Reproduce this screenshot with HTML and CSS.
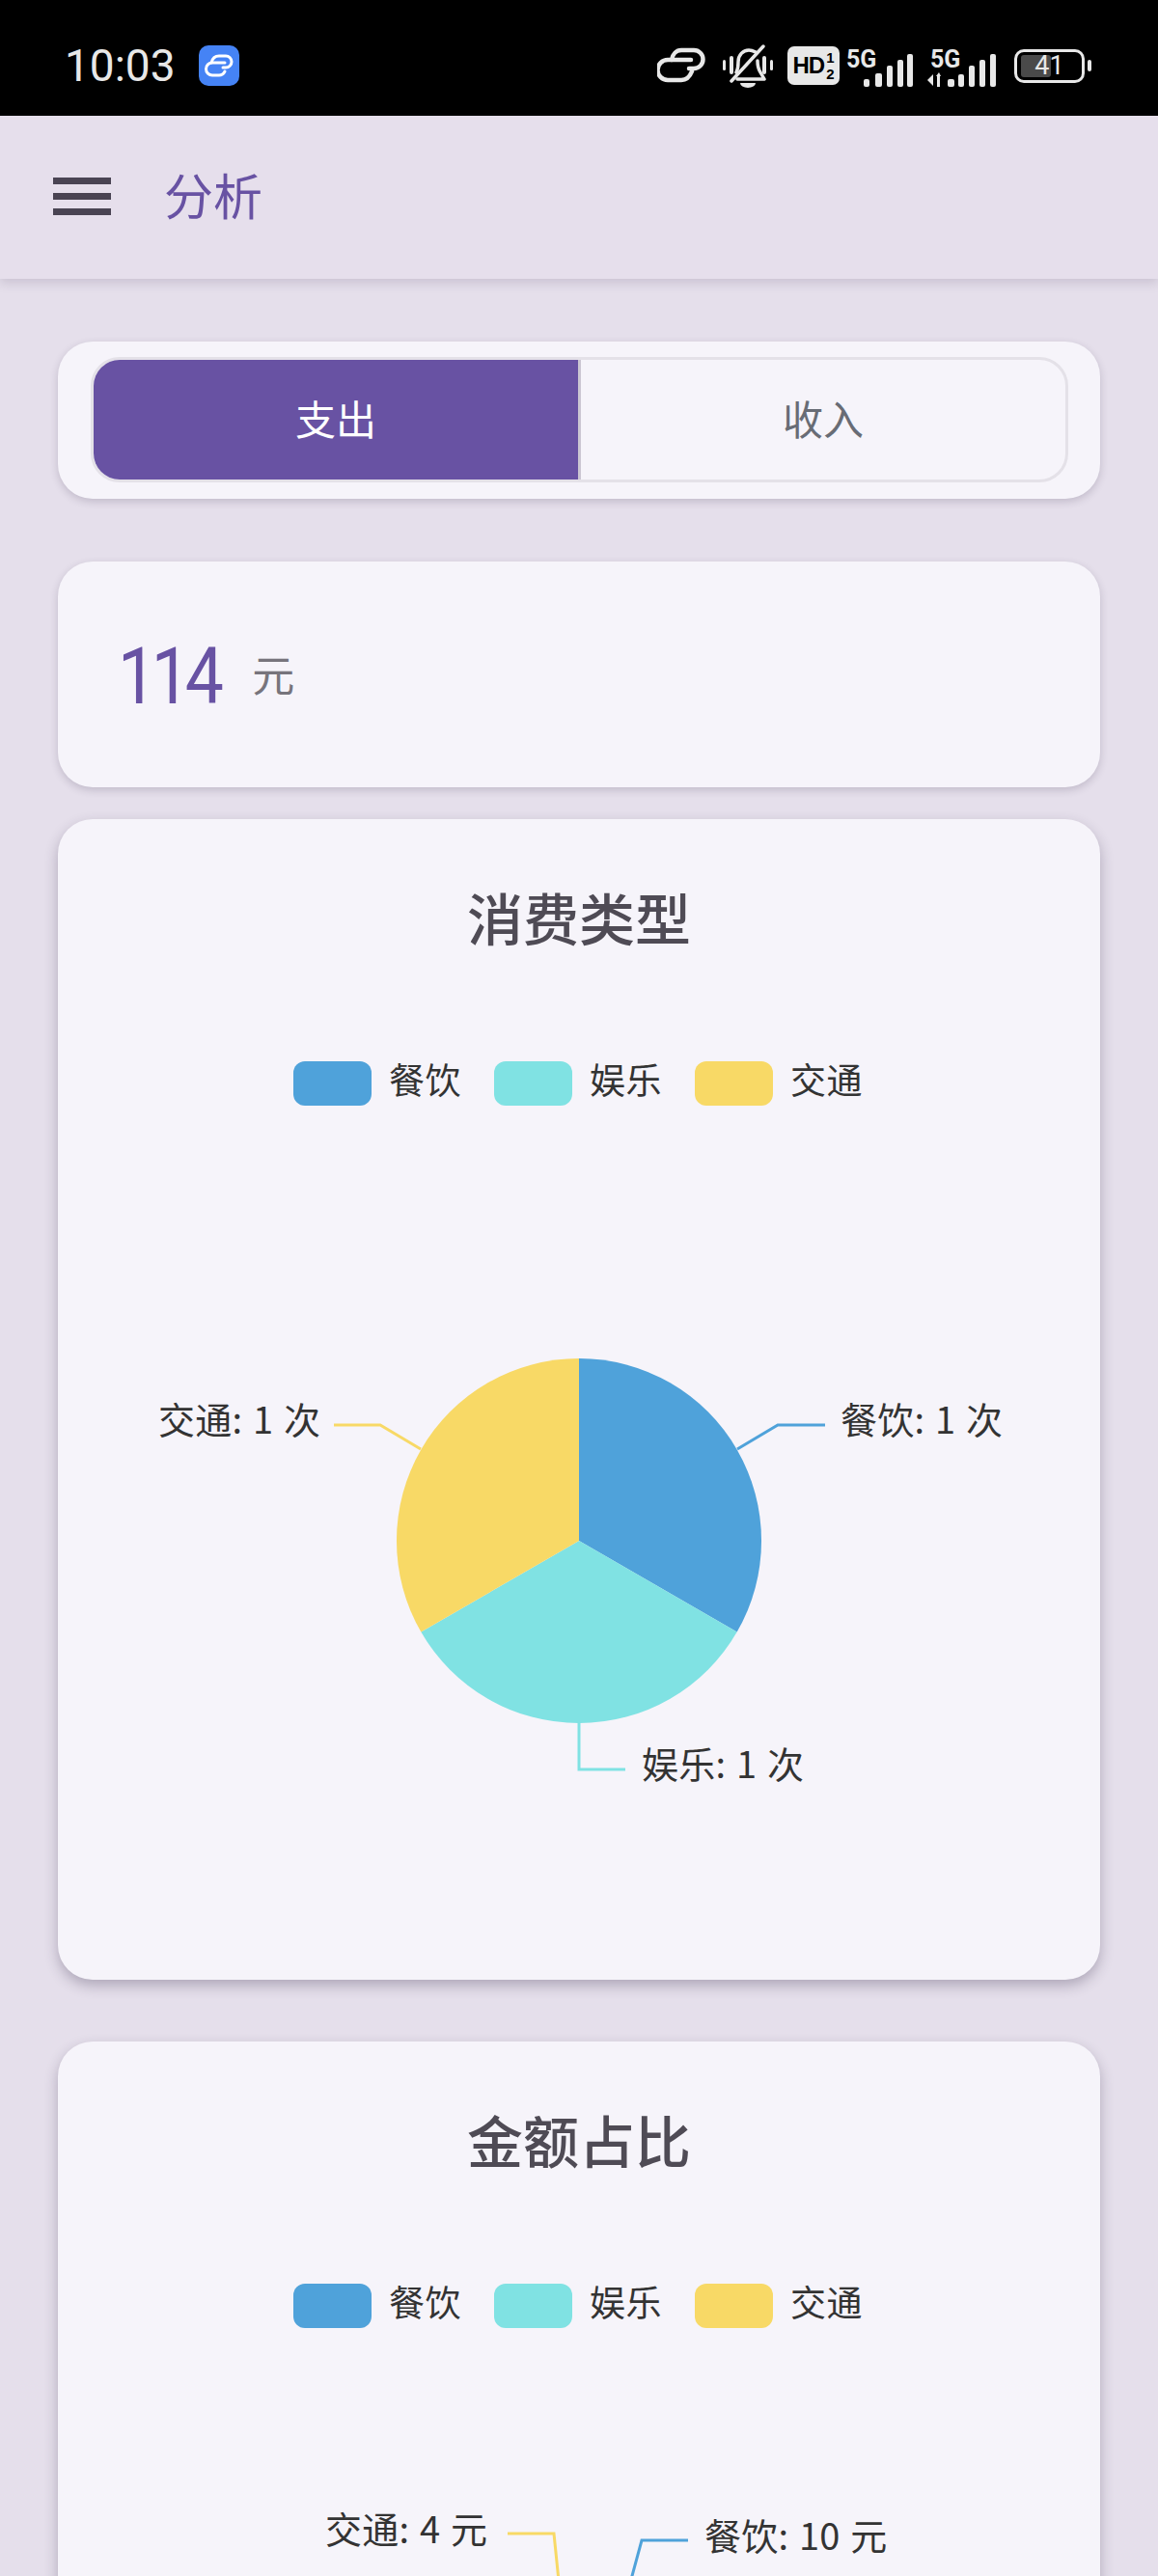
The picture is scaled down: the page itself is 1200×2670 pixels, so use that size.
FILE: index.html
```html
<!DOCTYPE html>
<html lang="zh-CN">

<head>
    <meta charset="UTF-8">
    <meta name="viewport" content="width=device-width, initial-scale=1.0">
    <title>分析</title>
    <link rel="stylesheet" href="styles.css">
</head>

<body>
    <div class="status-bar">
        <div class="status-left">
            <span class="clock">10:03</span>
            <svg class="app-badge" width="42" height="42" viewBox="0 0 42 42">
                <rect width="42" height="42" rx="10" fill="#4583f5" />
                <path d="M13 18c1-4 4-7 8-7h7a6 6 0 0 1 0 12h-3" fill="none" stroke="#fff" stroke-width="3" stroke-linecap="round" />
                <path d="M27 18H14a6.500 6.500 0 0 0 0 13h7c3 0 5-2 6-4" fill="none" stroke="#fff" stroke-width="3" stroke-linecap="round" />
            </svg>
        </div>
        <div class="status-right">
            <svg class="ic-link" width="50" height="38" viewBox="0 0 50 38">
                <path d="M15 13c1-6 5-10 10-10h13a9.500 9.500 0 0 1 0 19h-5" fill="none" stroke="#e8e8e8" stroke-width="4.500" stroke-linecap="round" />
                <path d="M35 13H11a10.500 10.500 0 0 0 0 21h14c5 0 9-4 11-9" fill="none" stroke="#e8e8e8" stroke-width="4.500" stroke-linecap="round" />
            </svg>
            <svg class="ic-bell" width="52" height="46" viewBox="0 0 52 46">
                <g fill="#e8e8e8">
                    <rect x="0" y="17" width="3" height="11" rx="1.500" />
                    <rect x="7" y="13" width="4" height="19" rx="2" />
                    <rect x="41" y="13" width="4" height="19" rx="2" />
                    <rect x="49" y="17" width="3" height="11" rx="1.500" />
                    <path d="M18 41h16a8 5 0 0 1-16 0z" />
                </g>
                <path d="M14 30c2-4 2-7 2-11 0-7 5-12 11-12 3 0 5 1 7 2M36 18c0 5 1 9 3 12l4 7H15" fill="none" stroke="#e8e8e8" stroke-width="3.500" stroke-linecap="round" stroke-linejoin="round" />
                <path d="M9 39 42 3" stroke="#e8e8e8" stroke-width="3.500" stroke-linecap="round" />
            </svg>
            <div class="hd-badge">
                <span class="hd-main">HD</span>
                <span class="hd-sims"><span>1</span><span>2</span></span>
            </div>
            <svg class="ic-signal" width="72" height="50" viewBox="0 -8 72 50">
                <text x="0" y="19" class="net-label">5G</text>
                <g fill="#e8e8e8">
                    <rect x="18" y="31" width="6" height="8" rx="2" />
                    <rect x="30" y="25" width="7" height="14" rx="2" />
                    <rect x="42" y="17" width="6" height="22" rx="2" />
                    <rect x="53" y="11" width="6" height="28" rx="2" />
                    <rect x="63" y="5" width="6" height="34" rx="2" />
                </g>
            </svg>
            <svg class="ic-signal-two" width="76" height="50" viewBox="0 -8 76 50">
                <text x="4" y="19" class="net-label">5G</text>
                <g fill="#e8e8e8">
                    <path d="M7 26v12l-6-6z" />
                    <path d="M10 28h5l-2-4zM11 28h3v11h-3z" />
                    <rect x="22" y="31" width="7" height="8" rx="2" />
                    <rect x="33" y="26" width="6" height="13" rx="2" />
                    <rect x="44" y="17" width="6" height="22" rx="2" />
                    <rect x="55" y="11" width="6" height="28" rx="2" />
                    <rect x="66" y="5" width="6" height="34" rx="2" />
                </g>
            </svg>
            <div class="battery">
                <div class="battery-body">
                    <div class="battery-level"></div>
                    <span class="battery-text">41</span>
                </div>
                <div class="battery-nub"></div>
            </div>
        </div>
    </div>

    <header class="app-bar">
        <div class="menu-icon"><span></span><span></span><span></span></div>
        <h1 class="page-title">分析</h1>
    </header>

    <main class="content">
        <section class="card switch-card">
            <div class="segment">
                <button class="segment-btn active">支出</button>
                <button class="segment-btn">收入</button>
            </div>
        </section>

        <section class="card total-card">
            <span class="total-num">114</span>
            <span class="total-unit">元</span>
        </section>

        <section class="card chart-card">
            <h2 class="chart-title">消费类型</h2>
            <div class="legend">
                <div class="legend-item"><span class="swatch food"></span><span>餐饮</span></div>
                <div class="legend-item"><span class="swatch fun"></span><span>娱乐</span></div>
                <div class="legend-item"><span class="swatch traffic"></span><span>交通</span></div>
            </div>
            <svg class="chart" viewBox="60 1146 1080 906">
                <path d="M600 1597V1408A189 189 0 0 1 763.700 1691.500Z" fill="#4fa2da" />
                <path d="M600 1597L763.700 1691.500A189 189 0 0 1 436.300 1691.500Z" fill="#80e2e3" />
                <path d="M600 1597L436.300 1691.500A189 189 0 0 1 600 1408Z" fill="#f8d966" />
                <path d="M764 1502 806 1477H855" class="leader" stroke="#4fa2da" />
                <path d="M600 1785V1834H648" class="leader" stroke="#80e2e3" />
                <path d="M436 1502 394 1477H346" class="leader" stroke="#f8d966" />
                <text x="871" y="1486" class="pie-label">餐饮: 1 次</text>
                <text x="665" y="1843" class="pie-label">娱乐: 1 次</text>
                <text x="164" y="1486" class="pie-label">交通: 1 次</text>
            </svg>
        </section>

        <section class="card chart-card">
            <h2 class="chart-title">金额占比</h2>
            <div class="legend">
                <div class="legend-item"><span class="swatch food"></span><span>餐饮</span></div>
                <div class="legend-item"><span class="swatch fun"></span><span>娱乐</span></div>
                <div class="legend-item"><span class="swatch traffic"></span><span>交通</span></div>
            </div>
            <svg class="chart" viewBox="60 2414 1080 906">
                <path d="M600 2864V2675A189 189 0 0 1 699 2703Z" fill="#4fa2da" />
                <path d="M600 2864 699 2703A189 189 0 1 1 558.600 2680Z" fill="#80e2e3" />
                <path d="M600 2864 558.600 2680A189 189 0 0 1 600 2675Z" fill="#f8d966" />
                <path d="M652 2682 665 2634H713" class="leader" stroke="#4fa2da" />
                <path d="M579 2676 574 2627H526" class="leader" stroke="#f8d966" />
                <text x="730" y="2644" class="pie-label">餐饮: 10 元</text>
                <text x="337" y="2637" class="pie-label">交通: 4 元</text>
            </svg>
        </section>
    </main>
</body>

</html>
```

FILE: styles.css
```css
html,
body {
    margin: 0;
    height: 2670px;
    overflow: hidden;
}

body {
    background-color: #e5dfeb;
    font-family: "Noto Sans CJK SC", "Noto Sans", sans-serif;
}

.status-bar {
    height: 120px;
    background-color: #000;
    display: flex;
    justify-content: space-between;
    align-items: center;
    padding: 16px 69px 0 67px;
    box-sizing: border-box;
}

.status-left {
    display: flex;
    align-items: center;
    gap: 24px;
}

.clock {
    font-family: Roboto, sans-serif;
    font-size: 46px;
    color: #e8e8e8;
    line-height: 1;
}

.app-badge {
    display: block;
}

.status-right {
    display: flex;
    align-items: center;
}

.status-right svg {
    display: block;
    flex: none;
}

.ic-link {
    margin-right: 18px;
}

.ic-bell {
    margin-right: 15px;
}

.hd-badge {
    width: 54px;
    height: 40px;
    background-color: #e8e8e8;
    border-radius: 7px;
    color: #000;
    display: flex;
    align-items: center;
    justify-content: center;
    font-family: "Liberation Sans", sans-serif;
    font-weight: 700;
    margin-right: 7px;
}

.hd-main {
    font-size: 24px;
    letter-spacing: -1px;
}

.hd-sims {
    display: flex;
    flex-direction: column;
    font-size: 15px;
    line-height: 17px;
    margin-left: 2px;
}

.ic-signal {
    margin-right: 11px;
}

.ic-signal-two {
    margin-right: 15px;
}

.net-label {
    font-family: Roboto, sans-serif;
    font-size: 25px;
    font-weight: 700;
    fill: #e8e8e8;
}

.battery {
    display: flex;
    align-items: center;
    gap: 3px;
}

.battery-body {
    width: 73px;
    height: 35px;
    border: 3px solid #e8e8e8;
    border-radius: 10px;
    box-sizing: border-box;
    position: relative;
    display: flex;
    align-items: center;
    justify-content: center;
}

.battery-level {
    position: absolute;
    left: 4px;
    top: 3px;
    bottom: 3px;
    width: 31px;
    background-color: #4a4a4a;
    border-radius: 3px;
}

.battery-text {
    position: relative;
    font-family: Roboto, sans-serif;
    font-size: 27px;
    line-height: 1;
    color: #e8e8e8;
}

.battery-nub {
    width: 4px;
    height: 12px;
    background-color: #e8e8e8;
    border-radius: 2px;
}

.app-bar {
    height: 169px;
    background-color: #e6dfec;
    box-shadow: 0 5px 10px rgba(60, 50, 80, 0.15);
    display: flex;
    align-items: center;
    padding-left: 55px;
    position: relative;
}

.menu-icon {
    width: 60px;
    display: flex;
    flex-direction: column;
    gap: 9px;
    margin-top: -2px;
}

.menu-icon span {
    display: block;
    height: 7px;
    background-color: #4a4453;
}

.page-title {
    margin: -7px 0 0 55px;
    font-size: 51px;
    font-weight: 400;
    color: #6852a3;
}

.content {
    padding: 65px 60px 0;
}

.card {
    background-color: #f6f4fa;
    border-radius: 36px;
    box-shadow: 0 3px 8px rgba(50, 40, 70, 0.2);
}

.switch-card {
    height: 163px;
    padding: 16px 33px 17px 34px;
    box-sizing: border-box;
    margin-bottom: 65px;
}

.segment {
    display: flex;
    height: 130px;
    border: 3px solid #e4e1e8;
    border-radius: 30px;
    overflow: hidden;
    box-sizing: border-box;
}

.segment-btn {
    flex: 1;
    border: none;
    background-color: transparent;
    font-family: inherit;
    font-size: 42px;
    color: #686c75;
    padding: 0 0 6px;
}

.segment-btn.active {
    background-color: #6852a3;
    color: #fff;
    border-right: 3px solid #cbc6d2;
}

.total-card {
    height: 234px;
    display: flex;
    align-items: center;
    padding-left: 62px;
    margin-bottom: 33px;
}

.total-num {
    font-family: Roboto, sans-serif;
    font-size: 82px;
    letter-spacing: -6px;
    color: #6852a3;
    line-height: 1;
    margin-top: 4px;
    transform: scaleX(0.87);
    transform-origin: left center;
}

.total-unit {
    font-size: 44px;
    color: #77747c;
    margin-left: 19px;
    line-height: 1;
    margin-top: -3px;
}

.chart-card {
    height: 1203px;
    box-sizing: border-box;
    padding-top: 63px;
    margin-bottom: 64px;
    box-shadow: 0 6px 14px rgba(50, 40, 70, 0.3);
}

.chart-title {
    margin: 0;
    font-size: 58px;
    line-height: 76px;
    font-weight: 500;
    color: #4f4b55;
    text-align: center;
}

.legend {
    display: flex;
    justify-content: center;
    gap: 34px;
    margin-top: 112px;
    padding-right: 2px;
}

.legend-item {
    display: flex;
    gap: 18px;
    font-size: 37px;
    line-height: 36px;
    letter-spacing: 0.5px;
    color: #333;
}

.swatch {
    width: 81px;
    height: 46px;
    border-radius: 12px;
}

.swatch.food {
    background-color: #4fa2da;
}

.swatch.fun {
    background-color: #80e2e3;
}

.swatch.traffic {
    background-color: #f8d966;
}

.chart {
    display: block;
    width: 1080px;
    height: 906px;
}

.leader {
    fill: none;
    stroke-width: 3;
}

.pie-label {
    font-family: "Noto Sans CJK SC", "Noto Sans", sans-serif;
    font-size: 38px;
    word-spacing: 2px;
    letter-spacing: 0.2px;
    fill: #333;
}
```
